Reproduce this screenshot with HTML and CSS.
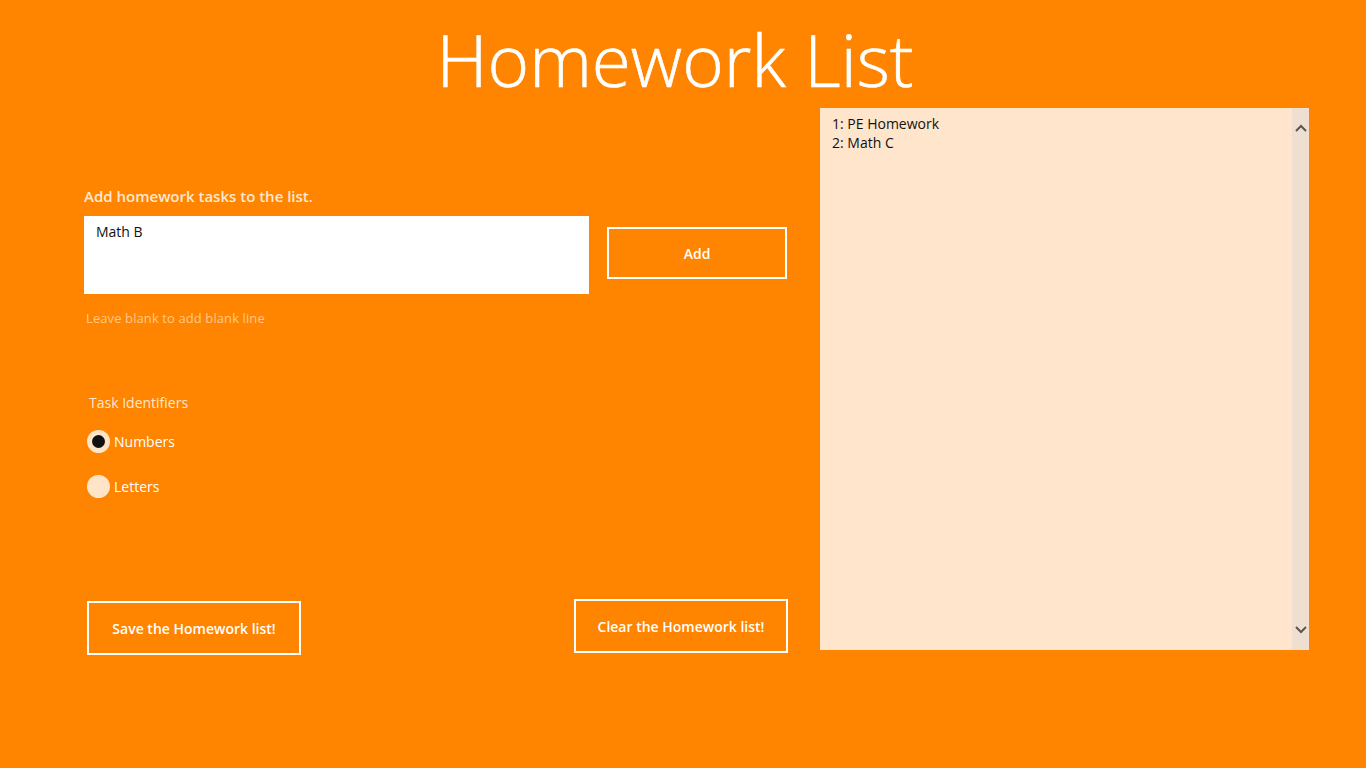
FILE: index.html
```html
<!DOCTYPE html>
<html lang="en">
<head>
<meta charset="utf-8">
<title>Homework List</title>
<link rel="stylesheet" href="styles.css">
</head>
<body>
<div class="app">
  <h1 class="title">Homework List</h1>
  <main class="content">
    <section class="editor">
      <label class="field-label" for="task">Add homework tasks to the list.</label>
      <div class="entry-row">
        <div class="textbox" id="task">Math B</div>
        <button class="btn btn-add">Add</button>
      </div>
      <p class="hint">Leave blank to add blank line</p>
      <div class="identifiers">
        <p class="group-label">Task Identifiers</p>
        <div class="radio checked"><span class="dot"></span><span class="radio-text">Numbers</span></div>
        <div class="radio"><span class="dot"></span><span class="radio-text">Letters</span></div>
      </div>
      <div class="actions">
        <button class="btn btn-save">Save the Homework list!</button>
        <button class="btn btn-clear">Clear the Homework list!</button>
      </div>
    </section>
    <section class="listbox">
      <div class="list-items">
        <div>1: PE Homework</div>
        <div>2: Math C</div>
      </div>
      <div class="scrollbar">
        <svg class="arrow" viewBox="0 0 12 8" width="12" height="8"><path d="M1 7 L6 2 L11 7" fill="none" stroke="#5c5650" stroke-width="2"/></svg>
        <svg class="arrow" viewBox="0 0 12 8" width="12" height="8"><path d="M1 1 L6 6 L11 1" fill="none" stroke="#5c5650" stroke-width="2"/></svg>
      </div>
    </section>
  </main>
</div>
</body>
</html>
```

FILE: styles.css
```css
* { box-sizing: border-box; }

html, body {
  margin: 0;
  height: 100%;
}

body {
  background: #ff8400;
  font-family: "Open Sans", "Noto Sans", sans-serif;
  color: #fff;
}

.app {
  width: 1366px;
  height: 768px;
}

.title {
  margin: 0;
  height: 108px;
  padding-top: 15px;
  padding-right: 16px;
  text-align: center;
  font-weight: 300;
  font-size: 71px;
  line-height: 90px;
  letter-spacing: 0;
  -webkit-text-stroke: 0.6px #fff;
}

.content {
  display: grid;
  grid-template-columns: 704px 489px;
  column-gap: 32px;
  padding-left: 84px;
}

.editor {
  display: flex;
  flex-direction: column;
}

.field-label {
  display: block;
  margin-top: 78px;
  height: 30px;
  font-size: 15px;
  font-weight: 600;
  line-height: 21px;
  color: #ffe8d2;
}

.entry-row {
  display: flex;
  align-items: flex-start;
}

.textbox {
  width: 505px;
  height: 78px;
  background: #fff;
  color: #111;
  font-size: 14px;
  line-height: 20px;
  padding: 6px 12px;
}

.btn {
  background: transparent;
  border: 2px solid #fff;
  color: #fff;
  font-family: inherit;
  font-weight: 600;
  font-size: 14px;
  padding: 0;
  cursor: pointer;
}

.btn-add {
  margin-left: 18px;
  margin-top: 11px;
  width: 180px;
  height: 52px;
}

.hint {
  margin: 15px 0 0 2px;
  font-size: 13px;
  line-height: 18px;
  letter-spacing: 0.1px;
  color: #ffc78f;
}

.identifiers {
  margin-top: 67px;
  padding-left: 3px;
}

.group-label {
  margin: 0 0 17px 2px;
  font-size: 14px;
  line-height: 18px;
  color: #ffe8d2;
}

.radio {
  display: flex;
  align-items: center;
  height: 24px;
  margin-bottom: 21px;
}

.dot {
  width: 23px;
  height: 23px;
  border-radius: 50%;
  background: #ffe4c8;
  display: flex;
  align-items: center;
  justify-content: center;
  margin-right: 4px;
}

.radio.checked .dot::after {
  content: "";
  width: 13px;
  height: 13px;
  border-radius: 50%;
  background: #111;
}

.radio-text {
  font-size: 14px;
  color: #fff;
}

.actions {
  display: flex;
  justify-content: space-between;
  align-items: flex-start;
  margin-top: 80px;
  padding-left: 3px;
}

.btn-save {
  width: 214px;
  height: 54px;
  margin-top: 2px;
}

.btn-clear {
  width: 214px;
  height: 54px;
}

.listbox {
  display: flex;
  height: 542px;
  background: #ffe5cc;
}

.list-items {
  flex: 1;
  padding: 6px 12px;
  color: #111;
  font-size: 14px;
  line-height: 19px;
}

.scrollbar {
  width: 17px;
  background: #eedfd0;
  display: flex;
  flex-direction: column;
  justify-content: space-between;
  align-items: center;
  padding: 16px 0 16px;
}
```
